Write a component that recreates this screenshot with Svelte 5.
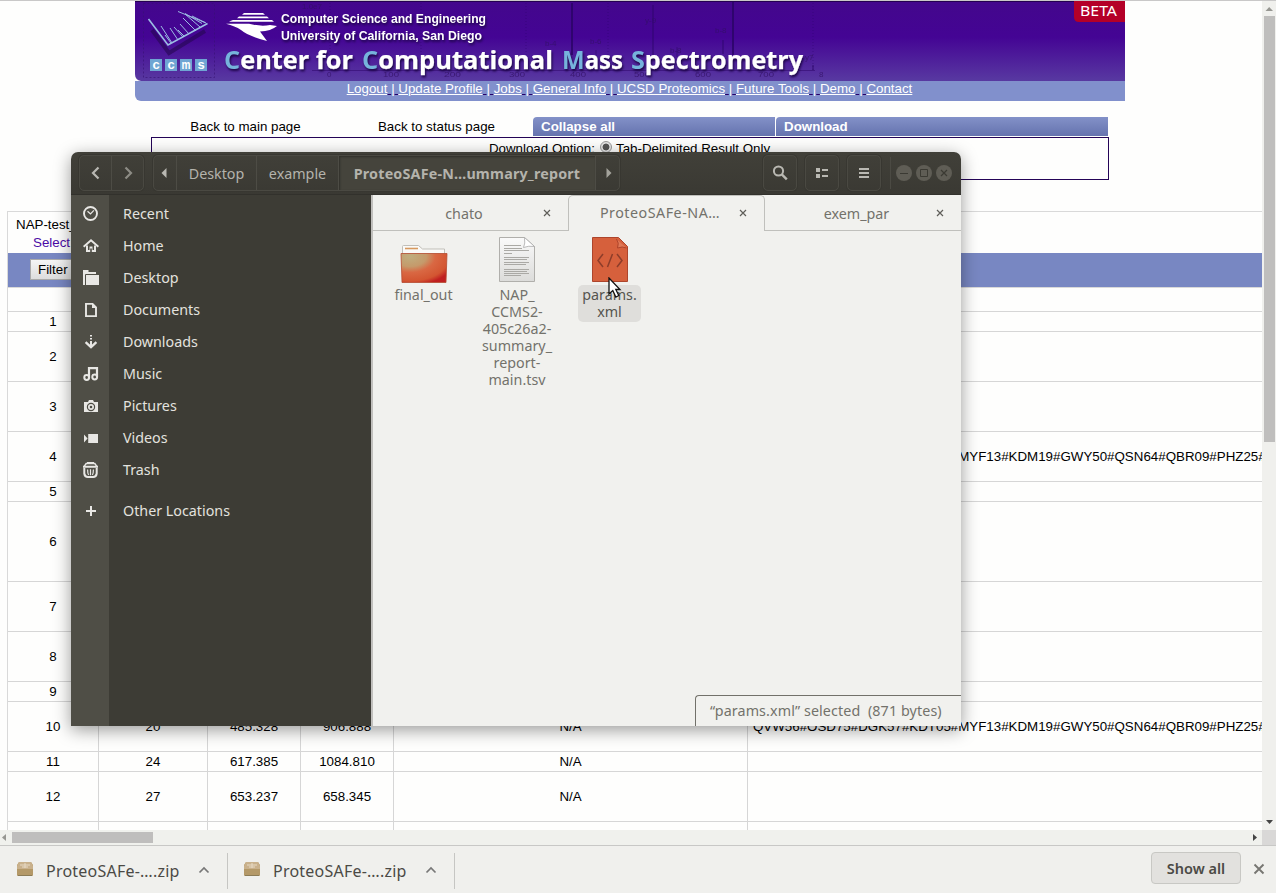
<script>
  const links = ['Logout', 'Update Profile', 'Jobs', 'General Info', 'UCSD Proteomics', 'Future Tools', 'Demo', 'Contact'];
  const peptides = 'QVW56#OSD75#DGK57#KDT05#MYF13#KDM19#GWY50#QSN64#QBR09#PHZ25#';
  const rows = [
    { h: 20, c: ['1'] },
    { h: 50, c: ['2'] },
    { h: 50, c: ['3'] },
    { h: 50, c: ['4', '', '', '', '', peptides] },
    { h: 20, c: ['5'] },
    { h: 80, c: ['6'] },
    { h: 50, c: ['7'] },
    { h: 50, c: ['8'] },
    { h: 20, c: ['9'] },
    { h: 50, c: ['10', '20', '485.328', '906.888', 'N/A', peptides] },
    { h: 20, c: ['11', '24', '617.385', '1084.810', 'N/A'] },
    { h: 50, c: ['12', '27', '653.237', '658.345', 'N/A'] },
    { h: 30, c: [] }
  ];
  const places = [
    ['Recent', 'recent'], ['Home', 'home'], ['Desktop', 'desktop'], ['Documents', 'documents'],
    ['Downloads', 'downloads'], ['Music', 'music'], ['Pictures', 'pictures'],
    ['Videos', 'videos'], ['Trash', 'trash'], ['Other Locations', 'plus']
  ];
  const tabs = [
    { name: 'chato', active: false },
    { name: 'ProteoSAFe-NA…', active: true },
    { name: 'exem_par', active: false }
  ];
</script>

{#snippet placeIcon(kind)}
  <svg width="16" height="16" viewBox="0 0 16 16" fill="#e8e7e4">
    {#if kind === 'recent'}
      <circle cx="7.5" cy="7.5" r="6.5" fill="none" stroke="#e8e7e4" stroke-width="1.9" />
      <path d="M4.5 5.2l3 2.7 3.4-3.5" fill="none" stroke="#e8e7e4" stroke-width="1.3" />
    {:else if kind === 'home'}
      <path d="M.6 8.800L8 2.300l7.400 6.500" fill="none" stroke="#e8e7e4" stroke-width="2" />
      <path d="M3 7.500h2V12h1.500V8.500h3V12H11V7.500h2V14H8.800v-3.500H7.200V14H3z" />
    {:else if kind === 'desktop'}
      <path d="M0 0h5.500v2H13v2H3v11H0z" />
      <path d="M3 5h13v10H3z" />
      <path d="M2.500 15V4.500H14" fill="none" stroke="#4f4e46" />
    {:else if kind === 'documents'}
      <path d="M3 1.900h6.600L13 5.300v8.800H3z" fill="none" stroke="#e8e7e4" stroke-width="1.900" />
      <path d="M9 1v5h5z" />
    {:else if kind === 'downloads'}
      <path d="M7 1h2v1.600H7zM7 4h2v1.600H7zM7 7h2v5H7z" />
      <path d="M2.600 8.200L8 13.200l5.400-5" fill="none" stroke="#e8e7e4" stroke-width="2.300" />
    {:else if kind === 'music'}
      <path d="M6 12V2.200h8V11" fill="none" stroke="#e8e7e4" stroke-width="2.200" />
      <circle cx="3.700" cy="11.500" r="2.400" fill="none" stroke="#e8e7e4" stroke-width="2" />
      <circle cx="11.700" cy="11" r="2.400" fill="none" stroke="#e8e7e4" stroke-width="2" />
    {:else if kind === 'pictures'}
      <path fill-rule="evenodd" d="M1 4h4l1-2h4l1 2h4v10H1zM8 4.800a4.200 4.200 0 100 8.400 4.200 4.200 0 000-8.400zM8 6a3 3 0 110 6 3 3 0 010-6zM8 7.700a1.300 1.300 0 100 2.600 1.300 1.300 0 000-2.600z" />
    {:else if kind === 'videos'}
      <path d="M5.200 4H15v9H5.200zM1 4.500L4.600 8.500 1 12.500z" />
    {:else if kind === 'trash'}
      <path d="M1 4.600L3.200 1.500h8.600L14 4.600" fill="none" stroke="#e8e7e4" stroke-width="1.500" />
      <path d="M0 3.800h15v2H0zM4 0h7v1.800H4z" />
      <path d="M1.300 6v5.500q.5 3.500 3.500 3.500h5.400q3 0 3.500-3.500V6" fill="none" stroke="#e8e7e4" stroke-width="2" />
      <path d="M4.600 7.500q0 4 1 5.500M7.500 7.200v6M10.400 7.500q0 4-1 5.500" fill="none" stroke="#e8e7e4" stroke-width="1.200" />
    {:else}
      <path d="M3 7h4V3h2v4h4v2H9v4H7V9H3z" />
    {/if}
  </svg>
{/snippet}

<div class="screen">
  <div class="viewport">
    <div class="page">
      <header>
        <svg class="banner" width="990" height="80" viewBox="135 1 990 80">
          <defs>
            <linearGradient id="purple" x1="0" y1="0" x2="0" y2="1">
              <stop offset="0" stop-color="#43078c" />
              <stop offset=".45" stop-color="#440494" />
              <stop offset="1" stop-color="#5839a1" />
            </linearGradient>
          </defs>
          <path d="M135 1h990v80H141q-6-1-6-7z" fill="url(#purple)" />
          <path d="M135 1.500h990" stroke="#250052" />
          <g stroke="#2a0466" fill="none" opacity=".8">
            <path d="M572 3v52" stroke-width="2" /><path d="M653 5v50M723 40v14" />
            <path d="M733 2v53" stroke-width="2" />
            <path d="M330 3v67M421 3v67M526 3v67M608 3v67M813 3v67" stroke-dasharray="1 2" opacity=".55" />
            <path d="M596 50v8M677 47v10M312 70.500h503" opacity=".6" />
            <path d="M813 65v5" />
          </g>
          <g font-family="Liberation Sans" font-size="8" fill="#311063" opacity=".75">
            <text x="327" y="77">0</text><text x="383" y="77" textLength="16" lengthAdjust="spacingAndGlyphs">100</text><text x="444" y="77" textLength="17" lengthAdjust="spacingAndGlyphs">200</text>
            <text x="509" y="77" textLength="16" lengthAdjust="spacingAndGlyphs">300</text><text x="570" y="77" textLength="16" lengthAdjust="spacingAndGlyphs">400</text><text x="634" y="77" textLength="16" lengthAdjust="spacingAndGlyphs">500</text>
            <text x="695" y="77" textLength="16" lengthAdjust="spacingAndGlyphs">600</text><text x="758" y="77" textLength="16" lengthAdjust="spacingAndGlyphs">700</text><text x="819" y="77">8</text>
            <text x="645" y="23">y-9</text><text x="715" y="33">b-8</text><text x="545" y="46">b-4</text><text x="590" y="44">b-6</text>
            <text x="670" y="53">b-8</text><text x="805" y="60">y7</text><text x="302" y="9">1.0e7</text>
          </g>
          <rect x="143.500" y="3.500" width="71" height="74" fill="none" stroke="#351071" stroke-dasharray="2 2" opacity=".6" />
          <path d="M152 30l17 23 36-22" fill="none" stroke="#240650" stroke-width="4" opacity=".6" />
          <g fill="none" stroke="#9cbde3">
            <path d="M148.500 19l19.500 26 39.500-21.500" stroke-width="1.600" />
            <path d="M161 26l11 17M165 35l6 8M170 28l8 12M174 27l9 10M178 30l6 6M180 24l9 10M183 18l13 13M185 14l15 13M178 11.500l27 11M185 13.500l17 10M192 16l14 7" stroke-width="1" />
          </g>
          <g fill="#6fa5d3"><path d="M150 59h12v12h-12zM165 59h12v12h-12zM180 59h12v12h-12zM195 59h12v12h-12z" /></g>
          <g fill="#fff" font-family="Liberation Sans" font-size="13" font-weight="700" text-anchor="middle">
            <text x="156" y="69">c</text><text x="171" y="69">c</text><text x="186" y="69" textLength="9" lengthAdjust="spacingAndGlyphs">m</text><text x="201" y="69">s</text>
          </g>
          <g fill="#fff">
            <path d="M244 13h19l2 1.700h-23zM239 16.500h28l2 1.800h-32zM233 20h39l2 1.800h-45q2-1 4-1.800z" />
            <path d="M226 23.800h23q12 3 21 1.200l7 1q-6 5-17 5.500l7 9.500q-19-5-26-11-6-4-15-6.200z" />
          </g>
          <g class="shadow" fill="#fff" font-family="Liberation Sans" font-size="13.500" font-weight="700">
            <text x="281" y="23" textLength="205" lengthAdjust="spacingAndGlyphs">Computer Science and Engineering</text>
            <text x="281" y="40" textLength="201" lengthAdjust="spacingAndGlyphs">University of California, San Diego</text>
          </g>
          <g class="shadow title" fill="#fff" font-size="24.500" font-weight="700">
            <text x="224" y="69" textLength="129" lengthAdjust="spacingAndGlyphs"><tspan class="cap">C</tspan>enter for</text>
            <text x="362" y="69" textLength="191" lengthAdjust="spacingAndGlyphs"><tspan class="cap">C</tspan>omputational</text>
            <text x="562" y="69" textLength="61" lengthAdjust="spacingAndGlyphs"><tspan class="cap">M</tspan>ass</text>
            <text x="631" y="69" textLength="172" lengthAdjust="spacingAndGlyphs"><tspan class="cap">S</tspan>pectrometry</text>
          </g>
          <path d="M1074 1h51v21h-46q-5 0-5-5z" fill="#b40028" />
          <text x="1080" y="16" font-family="Noto Sans" font-size="15" fill="#fff" textLength="37" lengthAdjust="spacingAndGlyphs">BETA</text>
        </svg>
        <nav>
          {#each links as link, i}<span class="link">{link}</span>{#if i < links.length - 1}<span class="gap">&nbsp;</span>|<span class="gap">&nbsp;</span>{/if}{/each}
        </nav>
      </header>

      <div class="actions">
        <div class="plain first">Back to main page</div>
        <div class="plain second">Back to status page</div>
        <div class="bar collapse">Collapse all</div>
        <div class="bar">Download</div>
      </div>
      <div class="options">Download Option: <i class="radio"></i> Tab-Delimited Result Only</div>

      <section class="table">
        <div class="caption"><div>NAP-test_</div><div class="select">Select</div></div>
        <div class="filter"><button>Filter</button></div>
        <div class="spacer"></div>
        {#each rows as row}
          <div class="row" style="height:{row.h}px">
            {#each [0, 1, 2, 3, 4, 5] as c}<div class="cell" class:long={c === 5}>{row.c[c] ?? ''}</div>{/each}
          </div>
        {/each}
      </section>
    </div>
    <div class="vscroll">
      <svg width="14" height="16"><path d="M3.500 10h7.500L7.200 6z" fill="#979792" /></svg>
      <div class="vthumb"></div>
      <svg width="14" height="14"><path d="M4 4h7L7.500 8z" fill="#444" /></svg>
    </div>
  </div>

  <div class="hscroll">
    <svg width="12" height="15"><path d="M6 4v7L2 7.500z" fill="#979792" /></svg>
    <div class="hthumb"></div>
    <svg class="right" width="14" height="15"><path d="M5 4v7l4-3.500z" fill="#444" /></svg>
    <div class="corner"></div>
  </div>

  <footer>
    {#each [0, 1] as n}
      <div class="download">
        <svg width="17" height="17" viewBox="0 0 17 17">
          <path d="M2 1h12l2 3v10q0 1-1 1H1q-1 0-1-1V4z" fill="#b49968" />
          <path d="M2 1h12l2 4v3H0V5z" fill="#c9b18c" />
          <path d="M3 4h10M8 2v5M5 6h6" stroke="#e7dac5" /><path d="M1 14.500h14" stroke="#8c7c56" />
        </svg>
        <span>ProteoSAFe-….zip</span>
        <svg width="12" height="8"><path d="M1.500 6.500L6 2l4.500 4.500" fill="none" stroke="#777" stroke-width="1.700" /></svg>
      </div>
    {/each}
    <button class="showall">Show all</button>
    <svg class="close" width="12" height="12"><path d="M1.500 1.500l9 9M10.500 1.500l-9 9" stroke="#777672" stroke-width="1.900" /></svg>
  </footer>

  <div class="window">
    <div class="titlebar">
      <div class="group navs">
        <div><svg width="12" height="16"><path d="M8.500 2.500L3 8 8.500 13.500" fill="none" stroke="#b9b8b2" stroke-width="2.200" /></svg></div>
        <div><svg width="12" height="16"><path d="M3.500 2.500L9 8 3.500 13.500" fill="none" stroke="#8d8c85" stroke-width="2.200" /></svg></div>
      </div>
      <div class="group path">
        <div class="arrow"><svg width="8" height="12"><path d="M5.500 1v10L.5 6z" fill="#b9b8b2" /></svg></div>
        <div class="crumb desk">Desktop</div>
        <div class="crumb ex">example</div>
        <div class="crumb current">ProteoSAFe-N…ummary_report</div>
        <div class="arrow last"><svg width="8" height="12"><path d="M2.500 1v10l5-5z" fill="#a3a29b" /></svg></div>
      </div>
      <div class="tools">
        <div class="group tool"><svg width="16" height="16"><circle cx="6.500" cy="6" r="4.600" fill="none" stroke="#b9b8b2" stroke-width="2" /><path d="M9.800 9.300l5 5" stroke="#b9b8b2" stroke-width="2.400" /></svg></div>
        <div class="group tool"><svg width="14" height="12" fill="#b9b8b2"><path d="M1 1h4v4H1zM1 7h4v4H1zM7 2h6v2H7zM7 8h6v2H7z" /></svg></div>
        <div class="group tool"><svg width="12" height="12" fill="#b9b8b2"><path d="M1 1h10v2H1zM1 5h10v2H1zM1 9h10v2H1z" /></svg></div>
      </div>
      <div class="controls">
        <svg width="16" height="16"><circle cx="8" cy="8" r="8" fill="#5f5d55" /><path d="M4 8.500h8" stroke="#3b3a33" /></svg>
        <svg width="16" height="16"><circle cx="8" cy="8" r="8" fill="#5f5d55" /><path d="M4.500 4.500h7v7h-7z" fill="none" stroke="#3b3a33" /></svg>
        <svg width="16" height="16"><circle cx="8" cy="8" r="8" fill="#5f5d55" /><path d="M5 5l6 6M11 5l-6 6" stroke="#3b3a33" stroke-width="1.200" /></svg>
      </div>
    </div>
    <div class="body">
      <aside>
        {#each places as [name, icon]}
          <div class="place" class:other={icon === 'plus'}>
            <div class="picon">{@render placeIcon(icon)}</div>
            <span>{name}</span>
          </div>
        {/each}
      </aside>
      <main>
        <div class="tabs">
          {#each tabs as tab}
            <div class="tab" class:active={tab.active}>
              <span>{tab.name}</span>
              <svg width="8" height="8"><path d="M1 1l6 6M7 1L1 7" stroke="#5f5e59" stroke-width="1.200" /></svg>
            </div>
          {/each}
        </div>
        <div class="files">
          <div class="file">
            <svg width="48" height="48" viewBox="0 0 48 48">
              <defs><radialGradient id="folder" cx=".2" cy=".1" r="1">
                <stop offset="0" stop-color="#bfae7f" /><stop offset=".35" stop-color="#c59a6b" /><stop offset=".55" stop-color="#d96843" /><stop offset=".85" stop-color="#d35531" /><stop offset="1" stop-color="#c01f20" />
              </radialGradient></defs>
              <path d="M2.500 18V10.500q0-1 1-1h15l4 3.500h22v5z" fill="#fafaf8" stroke="#c1bfb9" />
              <path d="M5 12.500h13" stroke="#d7995e" stroke-width="1.600" />
              <path d="M1 17.500h46l-1 29H2z" fill="url(#folder)" stroke="#b54c31" stroke-width=".8" />
            </svg>
            <div class="label"><span>final_out</span></div>
          </div>
          <div class="file">
            <svg width="48" height="48" viewBox="0 0 48 48">
              <defs><linearGradient id="paper" x1="0" y1="0" x2="0" y2="1"><stop offset="0" stop-color="#fafafa" /><stop offset="1" stop-color="#dcdcda" /></linearGradient></defs>
              <path d="M6.500 1.500h25l10 9v35h-35z" fill="url(#paper)" stroke="#b0afab" />
              <path d="M31.500 1.500q1 6-1 10 5-2 11-1z" fill="#fff" stroke="#aaa" stroke-width=".8" />
              <path d="M11 9.500h17M11 12.500h18M11 14.500h25M11 17.500h8M11 21.500h25M11 23.500h23M11 26.500h25M11 28.500h22M11 33.500h25M11 35.500h23M11 37.500h25M11 39.500h17" stroke="#aaa9a5" />
            </svg>
            <div class="label nap"><span>NAP_</span><span>CCMS2-</span><span>405c26a2-</span><span>summary_</span><span>report-</span><span>main.tsv</span></div>
          </div>
          <div class="file">
            <svg width="48" height="48" viewBox="0 0 48 48">
              <path d="M6.500 1.500h26l9 9v35h-35z" fill="#d6603c" stroke="#ad452c" />
              <path d="M30.500 3q3 4 1 9 5-2 9 0" fill="#df7957" stroke="#ae442b" />
              <path d="M17 18l-5 6.500 5 6.500M31 18l5 6.500-5 6.500M26.500 18l-5 13" fill="none" stroke="#8d3d2a" stroke-width="1.500" />
            </svg>
            <div class="label selected"><span>params.</span><span>xml</span></div>
          </div>
        </div>
        <div class="status">“params.xml” selected&nbsp; (871 bytes)</div>
      </main>
    </div>
    <svg class="pointer" width="14" height="22"><path d="M1 1v16l3.800-3.500 3 6.500 3-1.500-3-6H12z" fill="#fff" stroke="#111" stroke-width="1.300" /></svg>
  </div>
</div>

<style>
  :global(body) { margin: 0; overflow: hidden; }
  * { box-sizing: border-box; }
  svg { display: block; flex: none; }
  .screen { position: relative; display: flex; flex-direction: column; width: 1276px; height: 893px; overflow: hidden; background: #fefefd; font: 13.333px 'Liberation Sans', sans-serif; color: #000; }
  .viewport { display: flex; height: 830px; border-top: 1px solid #c9c8c8; }
  .page { width: 1262px; overflow: hidden; }
  header { width: 990px; margin-left: 135px; }
  .shadow { filter: drop-shadow(1px 2px 1px #1d0548); }
  .title { font-family: 'Open Sans', 'Noto Sans', sans-serif; stroke: #fff; stroke-width: .25; }
  .cap { fill: #76b3dc; stroke: none; }
  nav { height: 20px; padding-right: 1px; background: #8190cc; border-radius: 0 0 0 6px; text-align: center; color: #fff; line-height: 16px; white-space: nowrap; }
  .link { text-decoration: underline; }
  .gap { text-decoration: underline; text-decoration-color: #25006a; }
  .actions { display: flex; width: 957px; height: 19px; margin: 16px 0 0 151px; line-height: 19px; }
  .plain { text-align: center; padding-left: 1px; }
  .first { width: 188px; }
  .second { width: 194px; }
  .bar { flex: 1; padding-left: 8px; border-radius: 4px 0 0 0; color: #fff; font-weight: bold; background: linear-gradient(#8391c8, #6573ae); }
  .collapse { flex: none; width: 242px; margin-right: 1px; }
  .options { width: 958px; height: 43px; margin: 1px 0 0 151px; padding: 2px 1px 0 0; border: 1px solid #240457; text-align: center; line-height: 17px; white-space: nowrap; }
  .radio { display: inline-block; width: 12px; height: 12px; border: 1px solid #999; border-radius: 50%; background: radial-gradient(#555 0 3px, #e5e5e5 3.8px); margin: 0 1px; }
  .table { margin: 31px 0 0 7px; width: 1270px; border: 1px solid #d9d9d9; }
  .caption { height: 41px; padding: 4px 8px; line-height: 18px; }
  .select { padding-left: 17px; color: #4b0aa6; }
  .filter { height: 34px; background: #7887c2; padding: 6px 22px; }
  .filter button { display: block; width: 60px; height: 21px; border: 1px solid #aaa; background: linear-gradient(#f5f5f5, #ddd); font: inherit; padding: 0 7px 1px; text-align: left; }
  .spacer { height: 24px; border-top: 1px solid #d9d9d9; }
  .row { display: grid; grid-template-columns: 91px 109px 93px 93px 354px 1fr; border-top: 1px solid #d6d6d6; }
  .cell { display: flex; align-items: center; justify-content: center; border-right: 1px solid #d6d6d6; white-space: nowrap; overflow: hidden; padding-bottom: 1px; }
  .long { justify-content: flex-start; padding-left: 5px; }
  .vscroll { width: 14px; background: #f0f0ed; display: flex; flex-direction: column; }
  .vthumb { width: 11px; height: 426px; margin: -1px 0 auto 2px; background: #bfbebd; }
  .hscroll { display: flex; height: 15px; background: #f0f1ed; }
  .hthumb { width: 141px; height: 11px; margin-top: 2px; background: #bfbebd; }
  .right { margin-left: auto; }
  .corner { width: 14px; background: #d9d8d7; }
  footer { display: flex; height: 48px; align-items: center; border-top: 1px solid #c8c8c6; background: #f0f0ed; font: 16px 'Noto Sans', sans-serif; color: #4b4a45; }
  .download { display: flex; align-items: center; width: 228px; height: 36px; padding-left: 17px; border-right: 1px solid #c6c6c3; margin-top: 2px; }
  .download + .download { width: 227px; padding-left: 16px; }
  .download svg { margin-bottom: 2px; }
  .download span { width: 134px; margin: 0 18px 0 12px; white-space: nowrap; letter-spacing: .22px; }
  .showall { margin: 0 12px 3px auto; width: 90px; height: 32px; padding: 0; border: 1px solid #c8c8c4; border-radius: 4px; background: #e2e1de; color: #4b4a45; font: 600 14.500px 'Noto Sans', sans-serif; }
  .close { margin: 0 11px 2px 0; }

  .window { position: absolute; left: 71px; top: 152px; width: 890px; height: 574px; border-radius: 7px 7px 0 0; box-shadow: 0 4px 17px rgba(0, 0, 0, .4); font: 14.300px/20px 'Noto Sans', sans-serif; }
  .titlebar { display: flex; align-items: center; height: 43px; padding: 0 9px 1px 8px; border-radius: 7px 7px 0 0; background: linear-gradient(#414039, #3a3933); border-bottom: 1px solid #32312c; color: #b4b3ac; }
  .group { display: flex; height: 36px; border: 1px solid #4a4942; border-radius: 5px; box-shadow: 0 0 0 1px #383731; }
  .group > div { display: flex; align-items: center; justify-content: center; border-right: 1px solid #4d4c45; white-space: nowrap; }
  .group > div:last-child { border: 0; }
  .navs { width: 65px; }
  .navs > div { flex: 1; }
  .path { width: 467px; margin-left: 9px; }
  .arrow { width: 23px; }
  .group > .crumb { padding-top: 2px; }
  .desk { width: 80px; }
  .ex { width: 82px; }
  .current { flex: 1; background: #45443c; font-weight: 700; letter-spacing: .19px; box-shadow: inset 1px 1px 2px #302f2a; }
  .tools { display: flex; gap: 8px; margin-left: auto; }
  .tool { width: 34px; align-items: center; justify-content: center; }
  .controls { display: flex; gap: 4px; margin-left: 9px; padding: 8px 0 8px 5px; border-left: 1px solid #4b4a43; }
  .body { display: flex; height: 531px; }
  aside { width: 300px; padding-top: 3px; background: linear-gradient(90deg, #4f4e46 38px, #3d3c35 38px); color: #e3e2df; }
  .place { display: flex; align-items: center; height: 32px; }
  .other { margin-top: 9px; }
  .picon { width: 52px; padding-left: 12px; }
  main { flex: 1; display: flex; flex-direction: column; border-left: 2px solid #c1c0bd; background: #f1f1ee; color: #73726b; }
  .tabs { display: flex; height: 36px; border-bottom: 1px solid #c0c0bc; }
  .tab { display: flex; width: 195px; align-items: center; padding: 0 17px 0 12px; }
  .tab span { flex: 1; padding-top: 2px; text-align: center; white-space: nowrap; }
  .tab:last-child { width: 196px; }
  .active { width: 197px; height: 36px; border: 1px solid #c0c0bc; border-bottom: 0; border-radius: 5px 5px 0 0; background: #f1f1ee; padding-bottom: 1px; letter-spacing: .5px; }
  .active span { padding-top: 0; }
  .files { display: flex; padding: 5px 0 0 4px; }
  .file { display: flex; flex-direction: column; align-items: center; width: 93px; }
  .label { display: flex; flex-direction: column; align-items: center; line-height: 17px; margin-top: 2px; }
  .nap { padding-left: 1px; }
  .selected { width: 63px; height: 37px; margin-top: 1px; padding-top: 1px; border-radius: 5px; background: #dfdedb; color: #55544e; }
  .status { align-self: flex-end; width: 266px; height: 31px; margin-top: auto; padding: 5px 0 0 14px; border: 1px solid #72716a; border-width: 1px 0 0 1px; border-radius: 4px 0 0 0; white-space: nowrap; letter-spacing: .1px; }
  .pointer { position: absolute; left: 537px; top: 125px; }
</style>
